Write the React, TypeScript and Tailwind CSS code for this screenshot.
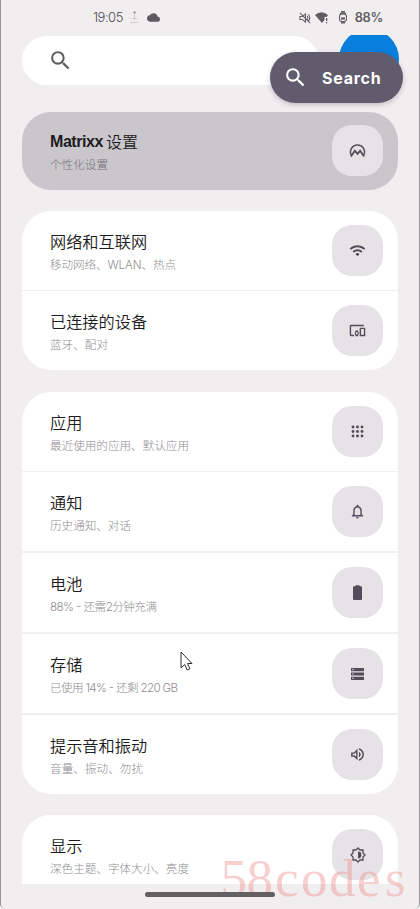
import type { ReactNode } from "react";
import {
  MdCloud,
  MdDevicesOther,
  MdNotificationsNone,
  MdOutlineVolumeUp,
  MdSearch,
  MdWifi,
} from "react-icons/md";

type Item = { title: ReactNode; sub: string; subWidth: number; icon: ReactNode };

function MatrixxIcon() {
  return (
    <svg width="17" height="17" viewBox="0 0 17 17" fill="none" stroke="currentColor" strokeLinejoin="miter">
      <path d="M2.3 13.2A7 7 0 1 1 14.7 13.2" strokeWidth="1.5" />
      <path d="M1.9 14.6L5.9 8.8L8.5 11.9L11.1 8.8L15.1 14.6" strokeWidth="1.8" />
    </svg>
  );
}

function AppsIcon() {
  return (
    <svg width="13" height="13" viewBox="0 0 13 13" fill="currentColor">
      {[2, 6.5, 11].map((y) => [2, 6.5, 11].map((x) => <circle key={`${x}-${y}`} cx={x} cy={y} r="1.45" />))}
    </svg>
  );
}

function BatteryIcon() {
  return (
    <svg width="9" height="15" viewBox="0 0 9 15" fill="currentColor">
      <path d="M2.5 1.2V0.3H6.5V1.2H8Q9 1.2 9 2.2V14Q9 15 8 15H1Q0 15 0 14V2.2Q0 1.2 1 1.2Z" />
    </svg>
  );
}

function StorageIcon() {
  return (
    <svg width="13" height="12" viewBox="0 0 13 12">
      <path d="M0 0H13V3.2H0zM0 4.4H13V7.6H0zM0 8.8H13V12H0z" fill="currentColor" />
      <path d="M1.3 1h1.3v1.2H1.3zM1.3 5.4h1.3v1.2H1.3zM1.3 9.8h1.3V11H1.3z" fill="#e6e3e6" />
    </svg>
  );
}

function BrightnessIcon() {
  return (
    <svg width="16" height="16" viewBox="0 0 16 16">
      <path
        d="M8 1L10 3H13V6L15 8L13 10V13H10L8 15L6 13H3V10L1 8L3 6V3H6Z"
        fill="none"
        stroke="currentColor"
        strokeWidth="1.3"
      />
      <path d="M8 4.6A3.4 3.4 0 0 1 8 11.4Z" fill="currentColor" />
    </svg>
  );
}

const groups: Item[][] = [
  [
    { title: "网络和互联网", sub: "移动网络、WLAN、热点", subWidth: 126, icon: <MdWifi size={17} /> },
    { title: "已连接的设备", sub: "蓝牙、配对", subWidth: 58, icon: <MdDevicesOther size={17} /> },
  ],
  [
    { title: "应用", sub: "最近使用的应用、默认应用", subWidth: 139, icon: <AppsIcon /> },
    { title: "通知", sub: "历史通知、对话", subWidth: 81, icon: <MdNotificationsNone size={17} /> },
    { title: "电池", sub: "88% - 还需2分钟充满", subWidth: 107, icon: <BatteryIcon /> },
    { title: "存储", sub: "已使用 14% - 还剩 220 GB", subWidth: 128, icon: <StorageIcon /> },
    { title: "提示音和振动", sub: "音量、振动、勿扰", subWidth: 93, icon: <MdOutlineVolumeUp size={17} /> },
  ],
];

function Row({ item, highlight = false }: { item: Item; highlight?: boolean }) {
  return (
    <div
      className={
        highlight
          ? "flex h-[78px] shrink-0 items-center justify-between pl-7 pr-[15px]"
          : "flex h-[79px] shrink-0 items-center justify-between bg-white pl-7 pr-[15px]"
      }
    >
      <div className={highlight ? "flex flex-col whitespace-nowrap pt-[3px] font-light" : "flex flex-col whitespace-nowrap pt-[3px] font-light"}>
        <div className="h-6 text-[16.2px] font-[350] leading-6 text-[#1c1c20]">{item.title}</div>
        <svg className={highlight ? "h-5 overflow-visible text-[#76747b]" : "h-5 overflow-visible text-[#8f8d91]"} width={item.subWidth} height="20">
          <text x="0" y="14.5" fill="currentColor" fontSize="11.6" textLength={item.subWidth} lengthAdjust="spacing">
            {item.sub}
          </text>
        </svg>
      </div>
      <div className="flex size-[51px] items-center justify-center rounded-[20px] bg-[#e6e3e6] text-[#514d5b]">
        {item.icon}
      </div>
    </div>
  );
}

function StatusBar() {
  return (
    <div className="flex h-[35px] shrink-0 items-center pl-[92px] pr-[36px] text-[#605e63]">
      <span className="font-['Inter'] text-[13px] font-light tracking-[-0.5px] text-[#4b494e]">19:05</span>
      <svg className="ml-[6px]" width="11" height="13" viewBox="0 0 11 13" fill="none" stroke="#d0cdd0">
        <path d="M5.5 1v8M3 7.5h5M1 11.5h9" />
        <path d="M4.5 1.5h2" stroke="#918d92" strokeWidth="2" />
      </svg>
      <MdCloud className="ml-[7px]" size={13} color="#5d595f" />
      <div className="flex-1" />
      <svg width="12" height="12" viewBox="0 0 13 13" fill="none" stroke="currentColor" strokeWidth="1.1">
        <path d="M1 5h2.5L7 2v9L3.5 8H1zM8.8 4.2q1.5 2.2 0 4.4M10.2 2.5q3 3.8 0 7.5M1 1l11 11" />
      </svg>
      <svg className="ml-[4px]" width="14" height="13" viewBox="0 0 14 13" fill="currentColor">
        <path d="M0 4Q6.5-1.5 13 4L11.5 6H9.5V9L7 12Z" />
        <path d="M11 7h1.3v3H11zM11 11h1.3v1.3H11z" />
      </svg>
      <svg className="ml-[9px] mr-[7px]" width="10" height="13" viewBox="0 0 10 13" fill="none" stroke="currentColor">
        <path d="M3 .8h4M2 2.5h6M3 11.7h4" strokeWidth="1.4" />
        <rect x="1.5" y="3" width="7" height="7.5" rx="2.5" strokeWidth="1.1" />
        <path d="M3 7.5h4" strokeWidth="2.2" />
      </svg>
      <span className="font-['Inter'] text-[12.8px] font-semibold tracking-[-0.3px]">88%</span>
    </div>
  );
}

export default function App() {
  return (
    <div className="relative flex h-[909px] w-[420px] flex-col overflow-hidden rounded-b-[5px] border-x border-[#99949b] bg-[#f1eef0] font-['Inter','Noto_Sans_CJK_SC',sans-serif]">
      <StatusBar />

      <header className="relative flex h-[50px] shrink-0 overflow-hidden pl-[21px]">
        <div className="mt-px flex h-[49px] w-[297px] items-center rounded-full bg-white pl-[26px]">
          <MdSearch size={25} color="#5f5f62" />
        </div>
        <div className="absolute left-[338px] top-[-6px] size-[60px] rounded-full bg-[#087fdd]" />
      </header>
      <div className="absolute left-[269px] top-[52px] flex h-[51px] w-[133px] items-center rounded-full bg-[#605c6d] pl-[13px] text-white shadow-[0_2px_5px_rgba(60,50,70,0.25)]">
        <MdSearch size={25} />
        <span className="ml-[14px] font-['Inter'] text-[16px] font-bold tracking-[0.75px]">Search</span>
      </div>

      <main className="mx-[21px] mt-[26.5px] flex h-[772px] w-[376px] shrink-0 flex-col gap-[21.2px] overflow-hidden">
        <section className="h-[78px] shrink-0 overflow-hidden rounded-[29px] bg-[#cac7cc]">
          <Row
            highlight
            item={{
              title: (
                <span className="flex gap-[3px] text-[16px]">
                  <b className="font-['Liberation_Sans'] font-bold tracking-[-0.45px]">Matrixx</b>
                  <span>设置</span>
                </span>
              ),
              sub: "个性化设置",
              subWidth: 58,
              icon: <MatrixxIcon />,
            }}
          />
        </section>
        {groups.map((group, index) => (
          <section key={index} className="flex shrink-0 flex-col gap-[1.8px] overflow-hidden rounded-[29px] bg-[#f1eff1]">
            {group.map((item) => <Row key={item.sub} item={item} />)}
          </section>
        ))}
        <section className="h-[100px] shrink-0 overflow-hidden rounded-t-[29px] bg-white">
          <Row item={{ title: "显示", sub: "深色主题、字体大小、亮度", subWidth: 139, icon: <BrightnessIcon /> }} />
        </section>
      </main>

      <svg className="pointer-events-none absolute left-[218px] top-[850px]" width="198" height="58">
        <text x="1.5 27.5 56 82 110 138 166" y="46" fontFamily="Liberation Serif, serif" fontSize="53" fill="#ee8d8d" fillOpacity="0.42">58codes</text>
      </svg>
      <div className="absolute left-[144px] top-[892px] h-[5px] w-[130px] rounded-full bg-[#626063]" />
      <svg className="absolute left-[179px] top-[651px]" width="14" height="21" viewBox="0 0 14 21">
        <path d="M1 1V17L4.7 13.5L7.2 19L9.9 17.8L7.5 12.5H12Z" fill="white" stroke="#303033" />
      </svg>
    </div>
  );
}
